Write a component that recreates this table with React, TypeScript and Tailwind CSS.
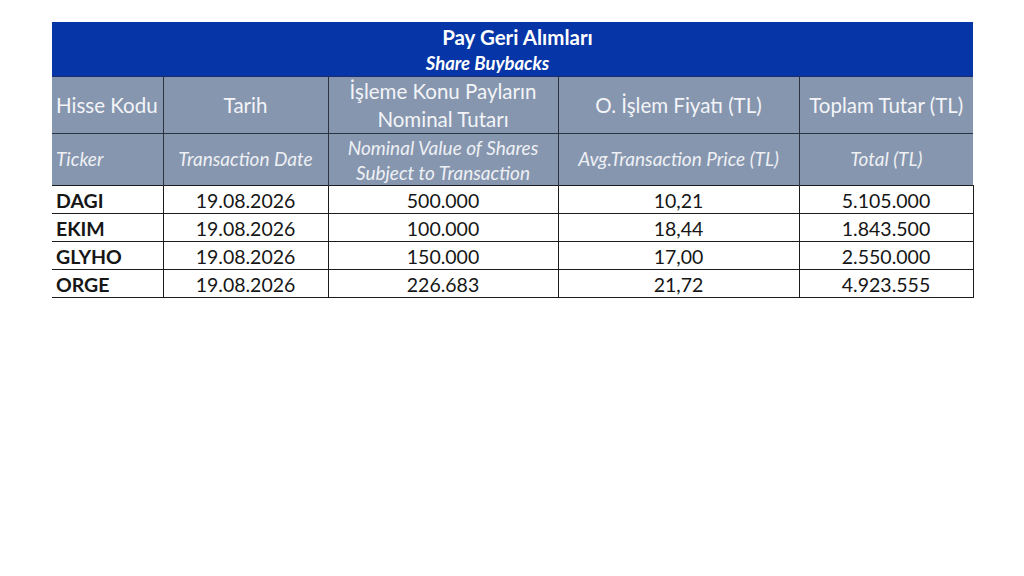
export default function App() {
  const rows = [
    { code: "DAGI", date: "19.08.2026", nominal: "500.000", price: "10,21", total: "5.105.000" },
    { code: "EKIM", date: "19.08.2026", nominal: "100.000", price: "18,44", total: "1.843.500" },
    { code: "GLYHO", date: "19.08.2026", nominal: "150.000", price: "17,00", total: "2.550.000" },
    { code: "ORGE", date: "19.08.2026", nominal: "226.683", price: "21,72", total: "4.923.555" },
  ];

  return (
    <div className="w-[1024px] h-[576px] bg-white overflow-hidden font-['Lato','Liberation_Sans',sans-serif]">
      <div className="pt-[22px] pl-[52px]">
        <table className="table-fixed border-collapse w-[921px]">
          <colgroup>
            <col className="w-[111px]" />
            <col className="w-[165px]" />
            <col className="w-[230px]" />
            <col className="w-[241px]" />
            <col className="w-[174px]" />
          </colgroup>
          <thead>
            {/* title band */}
            <tr className="h-[54px] bg-[#0535a6] border-b border-[#1b2d6e]">
              <th colSpan={5} className="p-0 text-white">
                <div className="flex flex-col items-center pt-[2px]">
                  <span className="ml-[10px] text-[20.5px] font-bold leading-[26px]">Pay Geri Alımları</span>
                  <span className="mr-[50px] text-[18.5px] font-bold italic leading-[26px]">Share Buybacks</span>
                </div>
              </th>
            </tr>

            {/* turkish headers */}
            <tr className="h-[56px] bg-[#8696af] text-[#f3f4f7] text-[20.5px]">
              <th className="pl-[4px] text-left font-normal">Hisse Kodu</th>
              <th className="border-l border-[#2c3340] font-normal">Tarih</th>
              <th className="border-l border-[#2c3340] font-normal leading-[28px]">
                İşleme Konu Payların
                <br />
                Nominal Tutarı
              </th>
              <th className="border-l border-[#2c3340] font-normal">O. İşlem Fiyatı (TL)</th>
              <th className="border-l border-[#2c3340] font-normal">Toplam Tutar (TL)</th>
            </tr>

            {/* english headers */}
            <tr className="h-[52px] bg-[#8696af] text-[#eef0f4] text-[19px] italic border-t border-[#2c3340]">
              <th className="pl-[4px] text-left font-normal">Ticker</th>
              <th className="border-l border-[#2c3340] font-normal">Transaction Date</th>
              <th className="border-l border-[#2c3340] font-normal leading-[25px]">
                Nominal Value of Shares
                <br />
                Subject to Transaction
              </th>
              <th className="border-l border-[#2c3340] font-normal">Avg.Transaction Price (TL)</th>
              <th className="border-l border-[#2c3340] font-normal">Total (TL)</th>
            </tr>
          </thead>
          <tbody className="text-[19.5px] text-[#161616]">
            {rows.map((r) => (
              <tr key={r.code} className="h-[28px] border-t border-b border-[#1c1c1c]">
                <td className="pl-[4px] pt-[2px] font-bold leading-[25px]">{r.code}</td>
                <td className="border-l border-[#1c1c1c] pt-[2px] text-center leading-[25px]">{r.date}</td>
                <td className="border-l border-[#1c1c1c] pt-[2px] text-center leading-[25px]">{r.nominal}</td>
                <td className="border-l border-[#1c1c1c] pt-[2px] text-center leading-[25px]">{r.price}</td>
                <td className="border-l border-r border-[#1c1c1c] pt-[2px] text-center leading-[25px]">{r.total}</td>
              </tr>
            ))}
          </tbody>
        </table>
      </div>
    </div>
  );
}
